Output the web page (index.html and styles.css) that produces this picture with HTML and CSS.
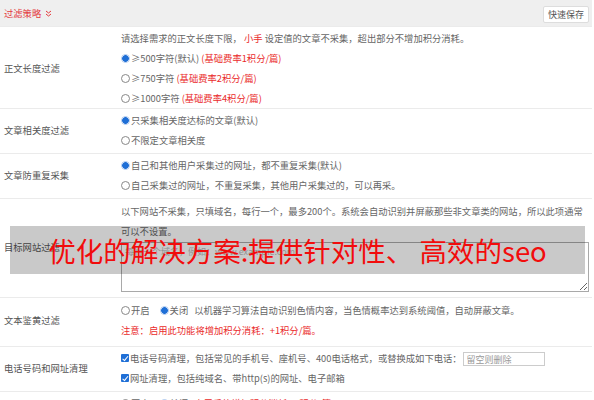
FILE: index.html
```html
<!DOCTYPE html>
<html lang="zh-CN">
<head>
<meta charset="utf-8">
<title>过滤策略</title>
<link rel="stylesheet" href="styles.css">
</head>
<body>
<div class="panel">
  <div class="head">
    <span class="head-title">过滤策略 <svg class="chev" width="7" height="7" viewBox="0 0 7 7"><path d="M1 1 L3.5 3 L6 1 M1 4 L3.5 6 L6 4" fill="none" stroke="#e4393c" stroke-width="1"/></svg></span>
    <button class="save">快速保存</button>
  </div>

  <div class="row row-first">
    <div class="label">正文长度过滤</div>
    <div class="value">
      <div class="line">请选择需求的正文长度下限， <span class="red">小手</span> 设定值的文章不采集，超出部分不增加积分消耗。</div>
      <div class="line"><span class="radio on"></span>≥500字符(默认) <span class="red">(基础费率1积分/篇)</span></div>
      <div class="line"><span class="radio"></span>≥750字符 <span class="red">(基础费率2积分/篇)</span></div>
      <div class="line"><span class="radio"></span>≥1000字符 <span class="red">(基础费率4积分/篇)</span></div>
    </div>
  </div>

  <div class="row">
    <div class="label">文章相关度过滤</div>
    <div class="value">
      <div class="line"><span class="radio on"></span>只采集相关度达标的文章(默认)</div>
      <div class="line"><span class="radio"></span>不限定文章相关度</div>
    </div>
  </div>

  <div class="row">
    <div class="label">文章防重复采集</div>
    <div class="value">
      <div class="line"><span class="radio on"></span>自己和其他用户采集过的网址，都不重复采集(默认)</div>
      <div class="line"><span class="radio"></span>自己采集过的网址，不重复采集，其他用户采集过的，可以再采。</div>
    </div>
  </div>

  <div class="row">
    <div class="label">目标网站过滤</div>
    <div class="value">
      <div class="para">以下网站不采集，只填域名，每行一个，最多200个。系统会自动识别并屏蔽那些非文章类的网站，所以此项通常可以不设置。</div>
      <textarea class="sites" placeholder="每行一个域名，例如：www.example.com"></textarea>
    </div>
  </div>

  <div class="row row-tall">
    <div class="label">文本鉴黄过滤</div>
    <div class="value">
      <div class="line"><span class="radio"></span>开启<span class="gap"></span><span class="radio on"></span>关闭<span class="gap2"></span>以机器学习算法自动识别色情内容，当色情概率达到系统阈值，自动屏蔽文章。</div>
      <div class="line red">注意：启用此功能将增加积分消耗：+1积分/篇。</div>
    </div>
  </div>

  <div class="row">
    <div class="label">电话号码和网址清理</div>
    <div class="value">
      <div class="line"><span class="check"></span>电话号码清理，包括常见的手机号、座机号、400电话格式，或替换成如下电话：<input class="phone" type="text" placeholder="留空则删除"></div>
      <div class="line"><span class="check"></span>网址清理，包括纯域名、带http(s)的网址、电子邮箱</div>
    </div>
  </div>

  <div class="row">
    <div class="label">标题和内容伪原创</div>
    <div class="value">
      <div class="line"><span class="radio"></span>开启<span class="gap"></span><span class="radio on"></span>关闭<span class="gap2"></span><span class="red">启用后将增加积分消耗 +1积分/篇</span></div>
      <div class="line">伪原创说明</div>
    </div>
  </div>

  <div class="banner">优化的解决方案:提供针对性、 高效的seo</div>
</div>
</body>
</html>
```

FILE: styles.css
```css
html, body {
  margin: 0;
  padding: 0;
  background: #fff;
}
body {
  font-family: "Noto Sans CJK SC", "Noto Sans", sans-serif;
  font-size: 9.3px;
  color: #666;
  overflow: hidden;
}
.panel {
  position: relative;
  width: 592px;
}
.head {
  height: 26px;
  background: #efefef;
  display: flex;
  align-items: center;
  justify-content: space-between;
  padding: 0 3px 0 4px;
}
.head-title {
  color: #e4393c;
  display: flex;
  align-items: center;
  gap: 2px;
}
.chev {
  margin-left: 2px;
}
.save {
  font-family: inherit;
  font-size: 9px;
  color: #555;
  background: #fff;
  border: 1px solid #ddd;
  border-radius: 2px;
  height: 17px;
  width: 46px;
  padding: 0;
  margin-top: 3px;
}
.row {
  display: grid;
  grid-template-columns: 121px 1fr;
  border-top: 1px solid #ebebeb;
  padding: 1px 0 3px;
}
.row-first {
  padding-bottom: 0;
}
.row-tall {
  padding: 2px 0 6px;
}
.label {
  color: #555;
  display: flex;
  align-items: center;
  padding-left: 4px;
}
.value {
  padding-right: 4px;
}
.line {
  height: 20px;
  line-height: 20px;
  white-space: pre;
}
.para {
  line-height: 20px;
  padding-top: 1px;
}
.red {
  color: #ea2b2b;
}
.gap { width: 10px; display: inline-block; }
.gap2 { width: 6px; display: inline-block; }
.radio {
  width: 7px;
  height: 7px;
  border: 1px solid #888;
  border-radius: 50%;
  display: inline-block;
  box-sizing: content-box;
  margin-right: 1px;
  background: #fff;
  vertical-align: middle;
  position: relative;
  top: -1px;
}
.radio.on {
  border-color: #a9c6ee;
  background: radial-gradient(circle, #1f6fd6 0 3.2px, #fff 3.6px);
}
.check {
  width: 8px;
  height: 8px;
  background: #1f6fd6;
  border-radius: 1px;
  display: inline-block;
  margin-right: 1px;
  position: relative;
  vertical-align: middle;
  top: -1px;
}
.check::after {
  content: "";
  position: absolute;
  left: 2.5px;
  top: 0.5px;
  width: 2px;
  height: 4.5px;
  border: solid #fff;
  border-width: 0 1.5px 1.5px 0;
  transform: rotate(40deg);
}
.sites {
  display: block;
  box-sizing: border-box;
  width: 468px;
  height: 50px;
  margin: 1px 0 2px;
  border: 1px solid #a9a9a9;
  font-family: inherit;
  font-size: 9px;
  padding: 2px 3px;
  resize: both;
}
.sites::placeholder { color: #bbb; }
.phone {
  box-sizing: border-box;
  width: 82px;
  height: 14px;
  border: 1px solid #ccc;
  font-family: inherit;
  font-size: 9px;
  padding: 0 3px;
  margin-left: 1px;
  vertical-align: middle;
}
.phone::placeholder { color: #999; }
.banner {
  position: absolute;
  left: 10px;
  top: 226px;
  width: 575px;
  height: 48px;
  background: rgba(0, 0, 0, 0.21);
  color: #f20c0c;
  font-size: 27.5px;
  line-height: 48px;
  text-align: center;
  white-space: nowrap;
}
```
